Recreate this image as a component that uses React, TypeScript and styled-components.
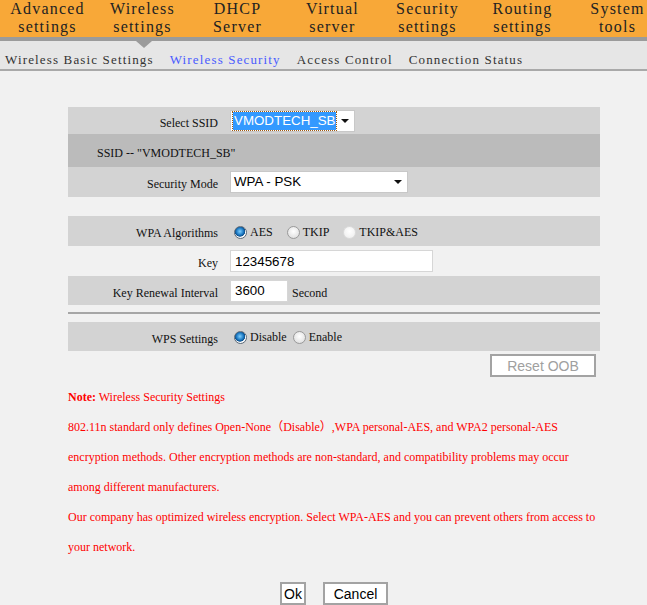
import React from 'react';
import styled, { createGlobalStyle, css } from 'styled-components';

const GlobalStyle = createGlobalStyle`
  html, body {
    margin: 0;
    padding: 0;
    background: #f1f1f1;
    overflow: hidden;
  }
  * {
    box-sizing: border-box;
  }
`;

const serif = `"Liberation Serif", "Noto Sans CJK SC", serif`;
const sans = `"Liberation Sans", Arial, sans-serif`;

const TopNav = styled.div`
  display: flex;
  height: 41px;
  background: #f8a838;
  border-bottom: 4px solid #9b9b9b;
  overflow: hidden;
  white-space: nowrap;
`;

const NavItem = styled.div<{ $active?: boolean }>`
  flex: 0 0 95px;
  text-align: center;
  font-family: ${serif};
  font-size: 16px;
  line-height: 18px;
  letter-spacing: 1.2px;
  color: #222;
`;

const NavWrap = styled.div`
  position: relative;
`;

const Caret = styled.span`
  position: absolute;
  left: 136px;
  top: 41px;
  width: 0;
  height: 0;
  border-left: 8px solid transparent;
  border-right: 8px solid transparent;
  border-top: 7px solid #9b9b9b;
  z-index: 2;
`;

const SubNav = styled.div`
  display: flex;
  align-items: center;
  gap: 16px;
  height: 30px;
  padding: 10px 0 0 5px;
  background: #e6e6e6;
  border-bottom: 2px solid #a9a9a9;
`;

const SubLink = styled.span<{ $active?: boolean }>`
  font-family: ${serif};
  font-size: 13px;
  letter-spacing: 1.15px;
  color: ${(p) => (p.$active ? '#4a5cff' : '#333')};
`;

const Main = styled.div`
  width: 532px;
  margin: 36px 0 0 68px;
`;

const Group = styled.div<{ $gap?: number }>`
  display: flex;
  flex-direction: column;
  margin-bottom: ${(p) => p.$gap ?? 0}px;
`;

const tones = {
  gray: '#d3d3d3',
  dark: '#bbbbbb',
  light: '#f1f1f1',
};

const Row = styled.div<{ $tone: keyof typeof tones; $h: number }>`
  display: flex;
  align-items: center;
  height: ${(p) => p.$h}px;
  background: ${(p) => tones[p.$tone]};
  font-family: ${serif};
  font-size: 12px;
  color: #111;
`;

const Label = styled.div`
  flex: 0 0 162px;
  padding: 5px 12px 0 0;
  text-align: right;
`;

const Heading = styled.div`
  padding: 6px 0 0 29px;
`;

const Field = styled.div`
  display: flex;
  align-items: center;
`;

const SelectBox = styled.div<{ $w: number }>`
  position: relative;
  display: flex;
  align-items: center;
  width: ${(p) => p.$w}px;
  height: 22px;
  padding: 0 2px;
  background: #fff;
  border: 1px solid #c8c8c8;
  font-family: ${sans};
  font-size: 13.33px;
  color: #000;
`;

const SelectValue = styled.span<{ $focused?: boolean }>`
  padding: 0 1px;
  line-height: 18px;
  ${(p) =>
    p.$focused &&
    css`
      background: #3399ff;
      color: #fff;
      outline: 1px dotted #a05a10;
    `}
`;

const Arrow = styled.span`
  position: absolute;
  right: 5px;
  top: 8px;
  width: 0;
  height: 0;
  border-left: 4px solid transparent;
  border-right: 4px solid transparent;
  border-top: 4px solid #111;
`;

const TextInput = styled.div<{ $w: number }>`
  display: flex;
  align-items: center;
  width: ${(p) => p.$w}px;
  height: 22px;
  padding: 0 4px;
  background: #fff;
  border: 1px solid #d6d6d6;
  font-family: ${sans};
  font-size: 13.33px;
  color: #000;
`;

const Unit = styled.span`
  margin-left: 4px;
  margin-top: 6px;
`;

const RadioGroup = styled.div`
  display: flex;
  align-items: center;
  padding-top: 2px;
`;

const Radio = styled.span<{ $checked?: boolean; $disabled?: boolean }>`
  display: inline-block;
  width: 13px;
  height: 13px;
  margin: 0 3px 0 4px;
  border-radius: 50%;
  border: 1px solid #9a9a9a;
  background: radial-gradient(circle at 50% 40%, #ffffff 0%, #e4e4e4 70%, #cfcfcf 100%);
  ${(p) =>
    p.$checked &&
    css`
      border-color: #5c6a78;
      background: radial-gradient(circle at 45% 40%, #7fd0ff 0%, #1b78c2 40%, #0d4f8a 55%, #ffffff 62%, #e8e8e8 100%);
    `}
  ${(p) =>
    p.$disabled &&
    css`
      border-color: #dcdcdc;
      background: radial-gradient(circle at 50% 40%, #ffffff 0%, #ececec 100%);
    `}
`;

const RadioText = styled.span<{ $gap?: number }>`
  margin-right: ${(p) => p.$gap ?? 10}px;
`;

const Rule = styled.div`
  height: 2px;
  margin: 7px 0 8px;
  background: #a6a6a6;
`;

const ButtonBar = styled.div<{ $align: 'center' | 'flex-end'; $top?: number }>`
  display: flex;
  justify-content: ${(p) => p.$align};
  gap: 17px;
  margin-top: ${(p) => p.$top ?? 0}px;
`;

const Button = styled.div<{ $muted?: boolean; $w: number }>`
  display: flex;
  align-items: center;
  justify-content: center;
  width: ${(p) => p.$w}px;
  height: 23px;
  background: #fff;
  border: 2px solid #a3a3a3;
  font-family: ${sans};
  font-size: 14px;
  color: ${(p) => (p.$muted ? '#a0a0a0' : '#000')};
`;

const Note = styled.div`
  margin-top: 5px;
  font-family: ${serif};
  font-size: 12px;
  line-height: 30px;
  color: #ff0000;
  white-space: nowrap;
`;

const NoteLine = styled.div``;

const Strong = styled.b`
  font-weight: bold;
`;

const navItems = [
  ['Advanced', 'settings'],
  ['Wireless', 'settings'],
  ['DHCP', 'Server'],
  ['Virtual', 'server'],
  ['Security', 'settings'],
  ['Routing', 'settings'],
  ['System', 'tools'],
];

const subItems = ['Wireless Basic Settings', 'Wireless Security', 'Access Control', 'Connection Status'];

export default function App() {
  return (
    <>
      <GlobalStyle />
      <NavWrap>
        <TopNav>
          {navItems.map(([a, b], i) => (
            <NavItem key={a} $active={i === 1}>
              {a}
              <br />
              {b}
            </NavItem>
          ))}
        </TopNav>
        <Caret />
      </NavWrap>
      <SubNav>
        {subItems.map((s, i) => (
          <SubLink key={s} $active={i === 1}>
            {s}
          </SubLink>
        ))}
      </SubNav>
      <Main>
        <Group $gap={19}>
          <Row $tone="gray" $h={27}>
            <Label>Select SSID</Label>
            <SelectBox $w={125}>
              <SelectValue $focused>VMODTECH_SB</SelectValue>
              <Arrow />
            </SelectBox>
          </Row>
          <Row $tone="dark" $h={33}>
            <Heading>SSID -- "VMODTECH_SB"</Heading>
          </Row>
          <Row $tone="gray" $h={30}>
            <Label>Security Mode</Label>
            <SelectBox $w={178}>
              <SelectValue>WPA - PSK</SelectValue>
              <Arrow />
            </SelectBox>
          </Row>
        </Group>
        <Group>
          <Row $tone="gray" $h={30}>
            <Label>WPA Algorithms</Label>
            <RadioGroup>
              <Radio $checked />
              <RadioText>AES</RadioText>
              <Radio />
              <RadioText>TKIP</RadioText>
              <Radio $disabled />
              <RadioText>TKIP&amp;AES</RadioText>
            </RadioGroup>
          </Row>
          <Row $tone="light" $h={30}>
            <Label>Key</Label>
            <TextInput $w={203}>12345678</TextInput>
          </Row>
          <Row $tone="gray" $h={29}>
            <Label>Key Renewal Interval</Label>
            <Field>
              <TextInput $w={58}>3600</TextInput>
              <Unit>Second</Unit>
            </Field>
          </Row>
        </Group>
        <Rule />
        <Group $gap={3}>
          <Row $tone="gray" $h={29}>
            <Label>WPS Settings</Label>
            <RadioGroup>
              <Radio $checked />
              <RadioText $gap={2}>Disable</RadioText>
              <Radio />
              <RadioText>Enable</RadioText>
            </RadioGroup>
          </Row>
        </Group>
        <ButtonBar $align="flex-end">
          <Button $muted $w={106} style={{ marginRight: 4 }}>
            Reset OOB
          </Button>
        </ButtonBar>
        <Note>
          <NoteLine>
            <Strong>Note:</Strong> Wireless Security Settings
          </NoteLine>
          <NoteLine>
            802.11n standard only defines Open-None（Disable）,WPA personal-AES, and WPA2 personal-AES
          </NoteLine>
          <NoteLine>
            encryption methods. Other encryption methods are non-standard, and compatibility problems may occur
          </NoteLine>
          <NoteLine>among different manufacturers.</NoteLine>
          <NoteLine>
            Our company has optimized wireless encryption. Select WPA-AES and you can prevent others from access to
          </NoteLine>
          <NoteLine>your network.</NoteLine>
        </Note>
        <ButtonBar $align="center" $top={20}>
          <Button $w={26}>Ok</Button>
          <Button $w={65}>Cancel</Button>
        </ButtonBar>
      </Main>
    </>
  );
}
